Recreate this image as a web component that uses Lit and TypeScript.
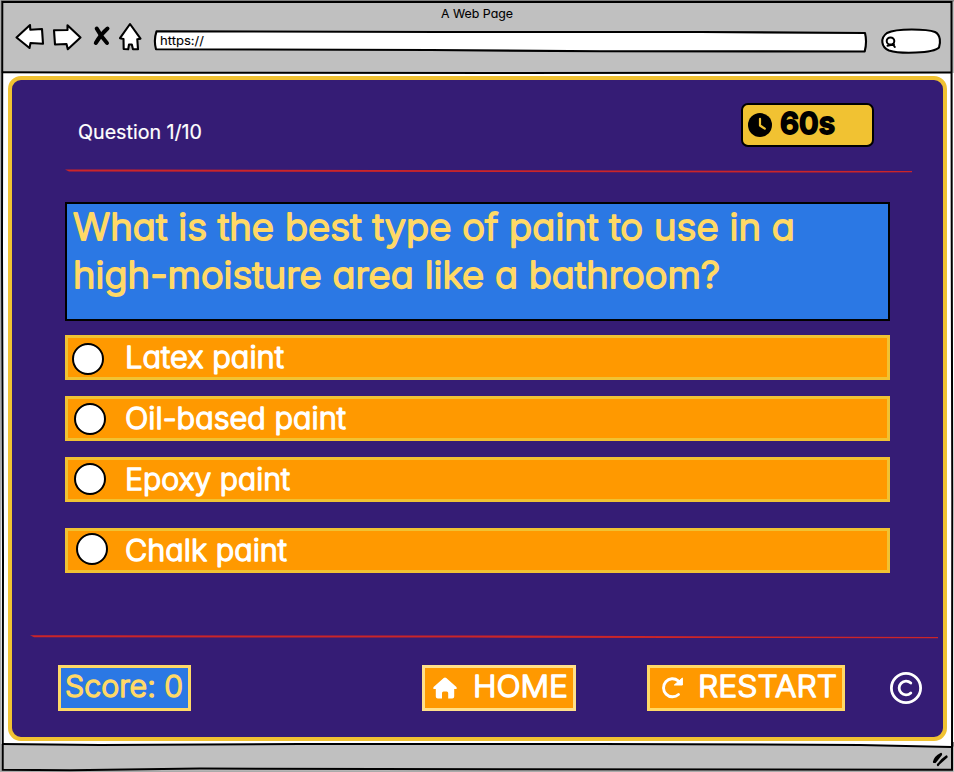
import { LitElement, html, svg, css } from "lit";
import { customElement } from "lit/decorators.js";
import { styleMap } from "lit/directives/style-map.js";

interface Answer {
  text: string;
  width: number;
  indent: number;
  drop: number;
  gap: number;
}

const answers: Answer[] = [
  { text: "Latex paint", width: 159, indent: 4, drop: 2, gap: 16 },
  { text: "Oil-based paint", width: 221, indent: 6, drop: 1, gap: 16 },
  { text: "Epoxy paint", width: 165, indent: 6, drop: 0, gap: 26 },
  { text: "Chalk paint", width: 162, indent: 8, drop: -1, gap: 0 },
];

/* A single line of rounded lettering fitted to a fixed width. */
const line = (text: string, width: number, height: number, baseline: number, kind: string) => html`
  <svg class="line ${kind}" width=${width} height=${height}>
    ${svg`<text x="0" y=${baseline} textLength=${width} lengthAdjust="spacingAndGlyphs">${text}</text>`}
  </svg>`;

@customElement("app-root")
export class AppRoot extends LitElement {
  static styles = css`
    :host {
      display: flex;
      flex-direction: column;
      position: relative;
      width: 954px;
      height: 772px;
      overflow: hidden;
      background: #fff;
      font-family: Inter, "Liberation Sans", sans-serif;
    }
    * { box-sizing: border-box; }
    svg { display: block; flex: none; overflow: visible; }
    .line text {
      fill: currentColor;
      stroke: currentColor;
      stroke-linejoin: round;
      stroke-linecap: round;
      font-feature-settings: "cv11" 1, "ss03" 1;
    }
    .tiny text { font-size: 12px; stroke-width: 0.1px; }
    .small text { font-size: 19.5px; stroke-width: 0.2px; }
    .mid text { font-size: 30px; font-weight: 300; stroke-width: 1.4px; }
    .big text { font-size: 37px; font-weight: 300; stroke-width: 1.8px; }
    .bold text { font-size: 30px; font-weight: 600; stroke-width: 1.8px; }
    .header {
      height: 73px;
      padding: 5px 12px 0 14px;
      background: #c0c0c0;
      color: #000;
    }
    .title { display: flex; justify-content: center; height: 16px; padding-right: 2px; }
    .tools { display: flex; height: 40px; align-items: center; }
    .nav { margin: 0 10px 8px 0; }
    .address {
      position: relative;
      width: 714px;
      height: 22px;
      padding: 0 0 0 7px;
    }
    .address .shape, .search .shape { position: absolute; left: 0; top: 0; }
    .address .line { position: relative; }
    .search { position: relative; width: 61px; height: 26px; margin-left: 15px; }
    .panel {
      display: flex;
      flex-direction: column;
      width: 939px;
      height: 665px;
      margin: 3px 0 0 8px;
      border: 4px solid #f1c232;
      border-radius: 13px;
      background: #351c75;
    }
    .top {
      display: flex;
      justify-content: space-between;
      height: 89px;
      padding: 23px 69px 0 66px;
      color: #fff;
    }
    .top .small { margin-top: 15px; }
    .timer {
      display: flex;
      align-items: center;
      width: 133px;
      height: 44px;
      padding-left: 5px;
      border: 2px solid #000;
      border-radius: 7px;
      background: #f1c232;
      color: #000;
    }
    .timer .line { margin-left: 8px; }
    .rule { height: 5px; }
    .upper { margin-left: 53px; }
    .question {
      width: 825px;
      height: 119px;
      margin: 28px 0 0 53px;
      padding: 0 0 0 6px;
      border: 2.5px solid #000;
      background: #2b78e4;
      color: #ffd966;
    }
    .answers { display: flex; flex-direction: column; margin: 14px 0 0 53px; }
    .answer {
      display: grid;
      grid-template-columns: 57px auto;
      width: 825px;
      height: 45px;
      border: 3px solid #f1c232;
      background: #ff9900;
      color: #fff;
    }
    .radio {
      width: 32px;
      height: 32px;
      border: 2px solid #000;
      border-radius: 50%;
      background: #fff;
    }
    .lower { margin: 61px 0 0 18px; }
    .actions { display: flex; height: 46px; margin: 26px 0 0 46px; color: #fff; }
    .button {
      display: flex;
      height: 46px;
      border: 3px solid #ffd966;
      background: #ff9900;
    }
    .score { width: 133px; padding-left: 4px; background: #2b78e4; color: #ffd966; }
    .home { width: 154px; margin-left: 231px; padding-left: 8px; border-color: #ffe08a; }
    .restart { width: 198px; margin-left: 71px; padding-left: 10px; }
    .icon { margin-top: 6px; }
    .home .line { margin-left: 16px; }
    .restart .line { margin-left: 14px; }
    .copyright { margin: 7px 0 0 45px; }
    .footer { flex: 1; margin-top: 3px; background: #c0c0c0; }
    .frame { position: absolute; left: 0; top: 0; pointer-events: none; }
  `;

  render() {
    return html`
      <header class="header">
        <div class="title">${line("A Web Page", 72, 16, 13, "tiny")}</div>
        <div class="tools">
          <svg class="nav" width="129" height="30" viewBox="14 22 129 30">
            <g fill="#fff" stroke="#000" stroke-width="2.1" stroke-linejoin="round" stroke-linecap="round">
              <path d="M16.5 37.5 L30 25 L30.3 29.7 L42 29 L43 43.7 L30.5 43 L29.5 48 Z" />
              <path d="M54 30.3 L67.5 30 L67.5 25.2 L80.5 37.5 L67.8 49.2 L66.5 44 L55 44.5 Z" />
              <path d="M130 24 L140.5 38.7 L137.3 39.3 L138 49.3 L133 49.2 L131.8 44.5 L129 44.5 L128.2 49.3 L123.7 49 L123.5 39 L120 38.2 Z" />
            </g>
            <g fill="none" stroke="#000" stroke-width="4" stroke-linecap="round">
              <path d="M96.7 28.5 Q101 36.5 107 43" />
              <path d="M107.5 28.5 Q100.5 34.5 95.8 43" />
            </g>
          </svg>
          <div class="address">
            <svg class="shape" width="714" height="22" viewBox="153 30 714 22">
              <path d="M156.5 31.3 L440 32 L700 32 L865 33 Q867.2 42 864.7 51.5 L600 51.3 L430 50 L156 49.3 Q153.5 40 156.5 31.3 Z" fill="#fff" stroke="#000" stroke-width="2.1" stroke-linejoin="round" />
            </svg>
            ${line("https://", 44, 22, 15, "tiny")}
          </div>
          <div class="search">
            <svg class="shape" width="61" height="26" viewBox="881 28 61 26">
              <path d="M887 33 C897 28 927 29 935 32 C941 35 940.5 43 939 47.5 C933 53.5 900 54 889 50.5 C881 47 880 38 887 33 Z" fill="#fff" stroke="#000" stroke-width="2.1" />
              <ellipse cx="890.5" cy="41" rx="3.8" ry="3.6" fill="none" stroke="#000" stroke-width="2" />
              <path d="M887.5 45.8 L894 44.3 M892.8 44 L894.8 47" fill="none" stroke="#000" stroke-width="2" stroke-linecap="round" />
            </svg>
          </div>
        </div>
      </header>

      <main class="panel">
        <div class="top">
          ${line("Question 1/10", 124, 24, 21, "small")}
          <div class="timer">
            <svg width="24" height="24" viewBox="0 0 24 24">
              <circle cx="12" cy="12" r="12" fill="#000" />
              <path d="M12 5.8 V12.5 L16.8 15.7" fill="none" stroke="#f1c232" stroke-width="2.2" stroke-linecap="round" stroke-linejoin="round" />
            </svg>
            ${line("60s", 55, 40, 29, "bold")}
          </div>
        </div>
        <svg class="rule upper" width="847" height="5" viewBox="0 0 847 5">
          <path d="M0 0.4 L60 0.5 L847 1.9 V3.2 L800 3.5 L4 2.6 Z" fill="#cc2529" />
        </svg>
        <div class="question">
          ${line("What is the best type of paint to use in a", 722, 49, 36, "big")}
          ${line("high-moisture area like a bathroom?", 647, 49, 35, "big")}
        </div>
        <div class="answers">
          ${answers.map(
            (a) => html`
              <div class="answer" style=${styleMap({ marginBottom: `${a.gap}px` })}>
                <span class="radio" style=${styleMap({ marginLeft: `${a.indent}px`, marginTop: `${a.drop + 3}px` })}></span>
                ${line(a.text, a.width, 39, 30, "mid")}
              </div>`
          )}
        </div>
        <svg class="rule lower" width="908" height="5" viewBox="0 0 908 5">
          <path d="M0 1.2 L60 1.3 L450 1.5 L908 3 V4.2 L650 3.9 L430 3.6 L4 3.2 Z" fill="#cc2529" />
        </svg>
        <div class="actions">
          <div class="button score">${line("Score: 0", 118, 40, 29, "mid")}</div>
          <div class="button home">
            <svg class="icon" width="24" height="24" viewBox="0 0 24 24">
              <path d="M10.7 4 Q12 2.9 13.3 4 L23.4 13 Q24.5 15 22.5 15 H21.2 V22.5 Q21.2 24.5 19.2 24.5 H15.2 V19 Q15.2 17.5 13.7 17.5 H10.5 Q9 17.5 9 19 V24.5 H4.8 Q2.8 24.5 2.8 22.5 V15 H1.5 Q-0.5 15 0.6 13 Z" fill="#fff" />
            </svg>
            ${line("HOME", 95, 40, 29, "mid")}
          </div>
          <div class="button restart">
            <svg class="icon" width="24" height="24" viewBox="0 0 24 24">
              <path d="M18.2 6.8 A9 9 0 1 0 18.5 20.5" fill="none" stroke="#fff" stroke-width="2.9" stroke-linecap="round" />
              <path d="M14.3 11 H22.4 V4 Z" fill="#fff" stroke="#fff" stroke-linejoin="round" />
            </svg>
            ${line("RESTART", 139, 40, 29, "mid")}
          </div>
          <svg class="copyright" width="32" height="32" viewBox="0 0 32 32">
            <g fill="none" stroke="#fff" stroke-width="2.8" stroke-linecap="round">
              <circle cx="16" cy="16" r="14.6" />
              <path d="M20.8 11 A6.9 6.9 0 1 0 20.8 21" />
            </g>
          </svg>
        </div>
      </main>

      <footer class="footer"></footer>

      <svg class="frame" width="954" height="772" viewBox="0 0 954 772">
        <path d="M949 742 L954 742 V747 Z M0 0 H954 V1.4 H0 Z" fill="#808080" />
        <path d="M600 741.7 H951 V747 L850 745 Z" fill="#fff" />
        <path d="M953 0 V772 H0 V770.5 H952 Z M0 0 H1 V772 H0 Z" fill="#aaa" />
        <g fill="none" stroke="#000" stroke-width="2">
          <path d="M2.3 2 H951.5 L951.7 240 L952.3 500 L952 769.7 L500 769.3 L200 768.5 L70 770.2 L2.7 769.7 L3 560 L2 250 Z" />
          <path d="M2 72.3 L160 72.7 L500 73 L951 72.5" />
          <path d="M2 744 L100 745 L300 744 L600 744 L860 744.9 L951 747" />
        </g>
        <path d="M934 762 Q935 757 941 754 M938 765 Q941 760 946.5 756.5 M935 762 L941 754.5 M938 764.5 L946.5 757" fill="none" stroke="#000" stroke-width="2.2" stroke-linecap="round" />
      </svg>
    `;
  }
}
